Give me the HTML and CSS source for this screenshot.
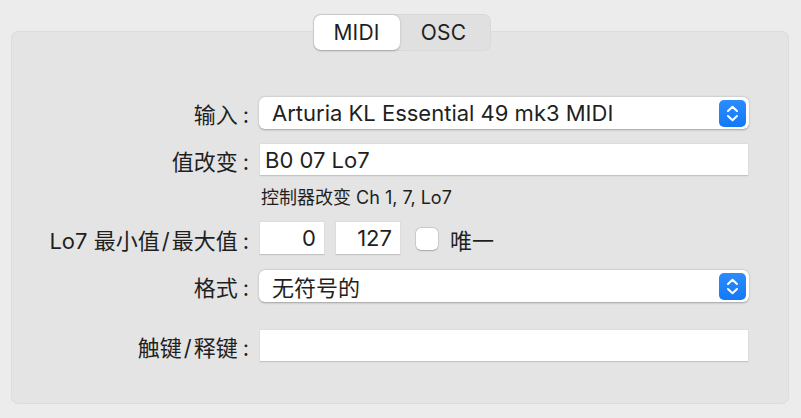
FILE: index.html
```html
<!DOCTYPE html>
<html lang="zh-CN">
<head>
<meta charset="utf-8">
<link rel="stylesheet" href="styles.css">
</head>
<body>
<div class="tabs">
  <div class="seg">
    <div class="tab active">MIDI</div>
    <div class="tab">OSC</div>
  </div>
</div>
<div class="panel">
  <div class="row r1">
    <div class="label">输入<span class="colon">:</span></div>
    <div class="popup">
      <span class="ptext">Arturia KL Essential 49 mk3 MIDI</span>
      <span class="stepper"><svg width="27" height="27" viewBox="0 0 27 27"><path d="M9 11 L13.5 6.8 L18 11" fill="none" stroke="#fff" stroke-width="2" stroke-linecap="round" stroke-linejoin="round"/><path d="M9 16 L13.5 20.2 L18 16" fill="none" stroke="#fff" stroke-width="2" stroke-linecap="round" stroke-linejoin="round"/></svg></span>
    </div>
  </div>
  <div class="row r2">
    <div class="label">值改变<span class="colon">:</span></div>
    <div class="field">B0 07 Lo7</div>
  </div>
  <div class="row r-help">
    <div class="label"></div>
    <div class="help">控制器改变 Ch 1, 7, Lo7</div>
  </div>
  <div class="row r3">
    <div class="label">Lo7 最小值<span class="slash">/</span>最大值<span class="colon">:</span></div>
    <div class="minmax">
      <div class="field num">0</div>
      <div class="field num">127</div>
      <div class="check"></div>
      <div class="checklabel">唯一</div>
    </div>
  </div>
  <div class="row r4">
    <div class="label">格式<span class="colon">:</span></div>
    <div class="popup">
      <span class="ptext">无符号的</span>
      <span class="stepper"><svg width="27" height="27" viewBox="0 0 27 27"><path d="M9 11 L13.5 6.8 L18 11" fill="none" stroke="#fff" stroke-width="2" stroke-linecap="round" stroke-linejoin="round"/><path d="M9 16 L13.5 20.2 L18 16" fill="none" stroke="#fff" stroke-width="2" stroke-linecap="round" stroke-linejoin="round"/></svg></span>
    </div>
  </div>
  <div class="row r5">
    <div class="label">触键<span class="slash wide">/</span>释键<span class="colon">:</span></div>
    <div class="field"></div>
  </div>
</div>
</body>
</html>
```
FILE: styles.css
```css
html, body {
  margin: 0;
  padding: 0;
}
body {
  background: #ececec;
  width: 801px;
  height: 418px;
  overflow: hidden;
  font-family: "Inter", "Noto Sans CJK SC", sans-serif;
  color: #1f1f1f;
}
.tabs {
  display: flex;
  justify-content: center;
  padding-top: 14px;
  padding-left: 2px;
  position: relative;
  z-index: 2;
}
.seg {
  display: flex;
  width: 178px;
  height: 37px;
  box-sizing: border-box;
  padding: 1px;
  background: #e0e0e0;
  border-radius: 8px;
  box-shadow: inset 0 0 0 0.5px rgba(0,0,0,0.06);
}
.tab {
  display: flex;
  align-items: center;
  justify-content: center;
  font-size: 21px;
  color: #1f1f1f;
  flex: 1;
  letter-spacing: 0.2px;
}
.tab.active {
  flex: 0 0 86px;
  background: #fff;
  border-radius: 7px;
  box-shadow: 0 0.5px 2px rgba(0,0,0,0.25);
}
.tab:not(.active) {
  padding-right: 2px;
}
.panel {
  margin: -20px 12px 0 11px;
  height: 373px;
  box-sizing: border-box;
  background: #e4e4e4;
  border: 1px solid #dcdcdc;
  border-radius: 7px;
  padding-top: 65px;
  display: flex;
  flex-direction: column;
}
.row {
  display: flex;
  align-items: center;
}
.label {
  width: 247px;
  flex: 0 0 247px;
  box-sizing: border-box;
  text-align: right;
  padding-right: 10px;
  font-size: 22px;
  white-space: nowrap;
}
.colon {
  margin-left: 5px;
}
.slash {
  margin: 0 2px;
}
.slash.wide {
  margin: 0 2px;
}
.popup {
  flex: 0 0 490px;
  height: 32px;
  background: #fff;
  border-radius: 6px;
  box-shadow: 0 0.5px 2px rgba(0,0,0,0.3);
  display: flex;
  align-items: center;
  justify-content: space-between;
  padding: 0 3px 0 13px;
  box-sizing: border-box;
}
.ptext {
  font-size: 22px;
}
.stepper {
  width: 27px;
  height: 27px;
  border-radius: 5px;
  background: linear-gradient(#2b8cfd, #1479f6);
  display: flex;
}
.field {
  flex: 0 0 488px;
  margin-left: 1px;
  height: 32px;
  box-sizing: border-box;
  background: #fff;
  border-bottom: 1px solid #c4c4c4;
  box-shadow: 0 0 0 0.5px rgba(0,0,0,0.06);
  font-size: 22px;
  display: flex;
  align-items: center;
  padding-left: 5px;
}
.r2 { margin-top: 15px; }
.r-help { margin-top: 8px; height: 24px; }
.help {
  font-size: 18px;
  padding-left: 2px;
}
.r3 { margin-top: 14px; }
.minmax {
  display: flex;
  align-items: center;
  margin-left: 1px;
}
.field.num {
  flex: 0 0 64px;
  width: 64px;
  height: 33px;
  margin-left: 0;
  justify-content: flex-end;
  padding: 0 8px 0 0;
}
.field.num + .field.num {
  margin-left: 12px;
}
.check {
  width: 22px;
  height: 22px;
  margin-left: 16px;
  background: #fff;
  border-radius: 5px;
  box-shadow: 0 0 0 0.5px rgba(0,0,0,0.15), 0 0.5px 1.5px rgba(0,0,0,0.2);
}
.checklabel {
  font-size: 22px;
  margin-left: 12px;
}
.r4 { margin-top: 15px; }
.r5 { margin-top: 28px; }
```
